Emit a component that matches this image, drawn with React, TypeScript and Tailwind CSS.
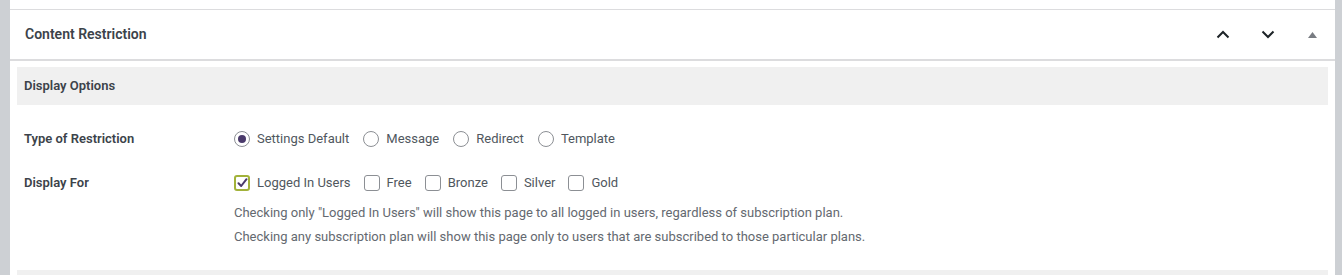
import { useState } from 'react';

const restrictionTypes = ['Settings Default', 'Message', 'Redirect', 'Template'];
const audiences = ['Logged In Users', 'Free', 'Bronze', 'Silver', 'Gold'];

function Radio({ checked }: { checked: boolean }) {
  return (
    <span className="w-4 h-4 rounded-full border border-[#8c8f94] bg-white flex items-center justify-center shrink-0">
      {checked && <span className="w-2 h-2 rounded-full bg-[#4a3a6b]" />}
    </span>
  );
}

function Checkbox({ checked }: { checked: boolean }) {
  return (
    <span
      className={
        checked
          ? 'w-4 h-4 rounded-[3px] border-2 border-[#a2b23a] bg-white flex items-center justify-center shrink-0'
          : 'w-4 h-4 rounded-[3px] border border-[#8c8f94] bg-white shrink-0'
      }
    >
      {checked && (
        <svg width="11" height="10" viewBox="0 0 11 10" fill="none">
          <path d="M1.5 5.2 L4.2 8 L9.5 1.2" stroke="#4a3a6b" strokeWidth="2" strokeLinecap="round" strokeLinejoin="round" />
        </svg>
      )}
    </span>
  );
}

export default function App() {
  const [type, setType] = useState('Settings Default');
  const [selected, setSelected] = useState<string[]>(['Logged In Users']);

  function toggle(name: string) {
    setSelected((prev) => (prev.includes(name) ? prev.filter((n) => n !== name) : [...prev, name]));
  }

  return (
    <div className="flex h-[275px] bg-white overflow-hidden" style={{ fontFamily: 'Roboto, "Liberation Sans", sans-serif' }}>
      <div className="w-[10px] shrink-0 bg-[#cdd0d4]" />

      <div className="flex-1 min-w-0 flex flex-col">
        {/* previous box edge */}
        <div className="h-[10px] shrink-0 border-b border-[#dcdcde]" />

        {/* Header */}
        <div className="h-[51px] shrink-0 flex items-center justify-between border-b-2 border-[#dcdcde] pl-[15px]">
          <h2 className="m-0 text-[14px] font-semibold text-[#3c434a]">Content Restriction</h2>
          <div className="flex items-center">
            <button className="w-[45px] h-[36px] flex items-center justify-center">
              <svg width="14" height="9" viewBox="0 0 14 9" fill="none">
                <path d="M1.5 7.5 L7 2 L12.5 7.5" stroke="#1d2327" strokeWidth="2" />
              </svg>
            </button>
            <button className="w-[45px] h-[36px] flex items-center justify-center">
              <svg width="14" height="9" viewBox="0 0 14 9" fill="none">
                <path d="M1.5 1.5 L7 7 L12.5 1.5" stroke="#1d2327" strokeWidth="2" />
              </svg>
            </button>
            <button className="w-[45px] h-[36px] flex items-center justify-center">
              <svg width="9" height="6" viewBox="0 0 9 6">
                <path d="M4.5 0 L9 6 L0 6 Z" fill="#787c82" />
              </svg>
            </button>
          </div>
        </div>

        {/* Body */}
        <div className="shrink-0 pl-[7px] pr-[7px] pt-[6px]">
          <div className="h-[38px] bg-[#f0f0f0] flex items-center px-[7px]">
            <h3 className="m-0 text-[13px] font-semibold text-[#3c434a]">Display Options</h3>
          </div>

          <div className="px-[7px] pt-[24px]">
            <div className="flex items-center h-5">
              <div className="w-[210px] shrink-0 text-[13px] font-semibold text-[#3c434a]">Type of Restriction</div>
              <div className="flex items-center gap-[14px]">
                {restrictionTypes.map((t) => (
                  <label key={t} className="flex items-center gap-[7px] cursor-pointer" onClick={() => setType(t)}>
                    <Radio checked={type === t} />
                    <span className="text-[13px] text-[#50575e]">{t}</span>
                  </label>
                ))}
              </div>
            </div>

            <div className="flex items-start mt-[24px]">
              <div className="w-[210px] shrink-0 h-5 flex items-center text-[13px] font-semibold text-[#3c434a]">Display For</div>
              <div>
                <div className="flex items-center h-5 gap-[13px]">
                  {audiences.map((a) => (
                    <label key={a} className="flex items-center gap-[7px] cursor-pointer" onClick={() => toggle(a)}>
                      <Checkbox checked={selected.includes(a)} />
                      <span className="text-[13px] text-[#50575e]">{a}</span>
                    </label>
                  ))}
                </div>
                <div className="mt-[8px] text-[13px] leading-[24px] text-[#646970]">
                  <p className="m-0">Checking only "Logged In Users" will show this page to all logged in users, regardless of subscription plan.</p>
                  <p className="m-0">Checking any subscription plan will show this page only to users that are subscribed to those particular plans.</p>
                </div>
              </div>
            </div>
          </div>

          <div className="mt-[21px] h-[20px] bg-[#f0f0f0]" />
        </div>
      </div>

      <div className="w-[7px] shrink-0 bg-[#cdd0d4]" />
    </div>
  );
}
